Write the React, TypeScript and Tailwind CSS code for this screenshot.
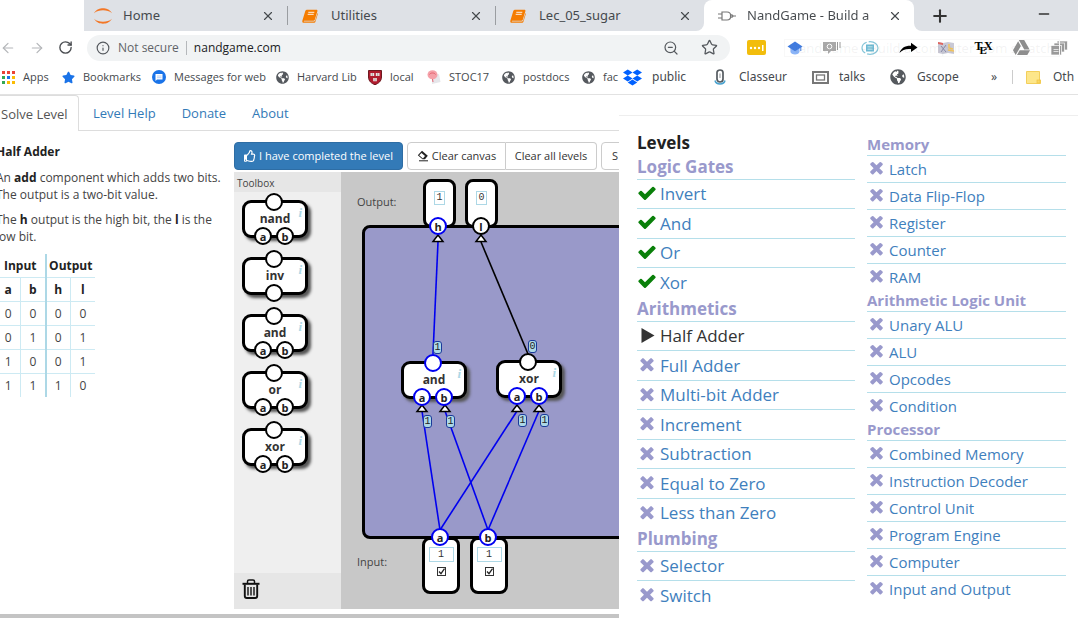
import React, { useState } from "react";
import { FaDropbox, FaGlobeAmericas, FaStar, FaRegThumbsUp, FaGoogleDrive } from "react-icons/fa";
import { ArrowLeft, ArrowRight, Info, Minus, Plus, RotateCw, Star, X, ZoomOut } from "lucide-react";

/* ---------- icons ---------- */

function JupyterIcon() {
  return (
    <svg viewBox="0 0 18 16" className="h-4 w-[18px] shrink-0" fill="#f37726">
      <path d="M0 5.2C2.500 1.200 6 .3 9 .3s6.500.9 9 4.900C15.500 3 12.500 2.200 9 2.200S2.500 3 0 5.200z" />
      <path d="M0 10.800C2.500 14.800 6 15.700 9 15.700s6.500-.9 9-4.900C15.500 13 12.500 13.800 9 13.800S2.500 13 0 10.800z" />
    </svg>
  );
}

function BookIcon() {
  return (
    <svg viewBox="0 0 16 14" className="h-[14px] w-4 shrink-0">
      <path d="M5 .8h9.300c.9 0 1.400.7 1.100 1.500l-2.600 8.500c-.2.600-.7 1-1.300 1H2.200c-.5 0-.6.8 0 .8h9.600c.7 0 1.200-.4 1.400-1l2.300-7.500.4.600-2.500 8c-.2.700-.8 1.100-1.500 1.100H1.800C.5 13.800 0 12.600.4 11.400L3.300 2C3.600 1.200 4.200.8 5 .8z" fill="#f57c00" />
      <path d="M6.300 3.300h6M5.700 5.300h6" stroke="#fff" strokeWidth=".9" />
    </svg>
  );
}

function GateIcon() {
  return (
    <svg viewBox="0 0 18 10" className="h-[10px] w-[18px] shrink-0" fill="none" stroke="#777" strokeWidth="1.200">
      <path d="M4 1h5c5 0 5 8 0 8H4zM0 3h4M0 7h4M14.600 5H18" />
      <circle cx="13.600" cy="5" r="1.200" />
    </svg>
  );
}

function AppsIcon() {
  const colors = ["#ea4335", "#ea4335", "#ea4335", "#34a853", "#1a73e8", "#fbbc04", "#34a853", "#fbbc04", "#fbbc04"];
  return (
    <svg viewBox="0 0 13 13" className="size-[13px] shrink-0">
      {colors.map((c, i) => (
        <rect key={i} x={(i % 3) * 5} y={Math.floor(i / 3) * 5} width="3" height="3" fill={c} />
      ))}
    </svg>
  );
}

function MessageIcon() {
  return (
    <svg viewBox="0 0 14 14" className="size-[14px] shrink-0">
      <circle cx="7" cy="7" r="7" fill="#1a73e8" />
      <path d="M3.500 4h7v5.500h-5.500L3.500 11z" fill="#fff" />
      <path d="M5 6h4.500M5 7.700h4.500" stroke="#a8c7f5" strokeWidth=".8" />
    </svg>
  );
}

function ShieldIcon() {
  return (
    <svg viewBox="0 0 14 15" className="h-[15px] w-[14px] shrink-0">
      <path d="M.5.500h13v6.500c0 4-3 6.500-6.500 7.700C3.500 13.500.5 11 .5 7z" fill="#b01c2e" stroke="#6d1a20" />
      <path d="M2.500 3h3.700v3H2.500zM7.800 3h3.700v3H7.800zM5.200 8h3.600v3.200H5.200z" fill="#f3e3e3" />
      <path d="M4.300 3v3M9.700 3v3M7 8v3" stroke="#888" strokeWidth=".7" />
    </svg>
  );
}

function BalloonIcon() {
  return (
    <svg viewBox="0 0 14 15" className="h-[15px] w-[14px] shrink-0">
      <path d="M5 6l7-2 1.500 8L5 14z" fill="#e6e6ea" />
      <ellipse cx="5.500" cy="4.800" rx="5" ry="4.500" fill="#f5a0a8" />
      <path d="M2.500 4.500c1-2 5-2 6 0M5.500 9l.5 3" stroke="#e4626f" fill="none" />
    </svg>
  );
}

function ClipIcon() {
  return (
    <svg viewBox="0 0 12 16" className="h-4 w-3 shrink-0" fill="none">
      <path d="M3 8V3.500a3 2.500 0 0 1 6 0V10a3 3 0 0 1-6 0z" stroke="#555b60" strokeWidth="1.700" />
      <path d="M6 4.500V9" stroke="#8b9196" />
      <path d="M1 11.500c1 4.500 9 4.500 10 0" stroke="#4aa3cf" strokeWidth="1.500" />
    </svg>
  );
}

function FrameIcon() {
  return (
    <svg viewBox="0 0 17 13" className="h-[13px] w-[17px] shrink-0" fill="none" stroke="#777">
      <rect x="1" y="1" width="15" height="11" strokeWidth="2" />
      <rect x="4.500" y="4" width="8" height="5" strokeWidth="1.300" />
    </svg>
  );
}

function FolderIcon() {
  return (
    <svg viewBox="0 0 15 13" className="h-[13px] w-[15px] shrink-0">
      <path d="M.5.500h13V9h1v3.500H.5z" fill="#fde68a" stroke="#f3cf5b" />
      <rect x="11" y="9" width="3" height="3" fill="#f9d865" stroke="#efc23f" strokeWidth=".7" />
    </svg>
  );
}

const CHECK =
  "M1671 566q0 40-28 68l-724 724-136 136q-28 28-68 28t-68-28l-136-136-362-362q-28-28-28-68t28-68l136-136q28-28 68-28t68 28l294 295 656-657q28-28 68-28t68 28l136 136q28 28 28 68z";
const CROSS =
  "M1490 1322q0 40-28 68l-136 136q-28 28-68 28t-68-28l-294-294-294 294q-28 28-68 28t-68-28l-136-136q-28-28-28-68t28-68l294-294-294-294q-28-28-28-68t28-68l136-136q28-28 68-28t68 28l294 294 294-294q28-28 68-28t68 28l136 136q28 28 28 68t-28 68l-294 294 294 294q28 28 28 68z";

type Status = "done" | "current" | "locked";

function StatusIcon({ status, small }: { status: Status; small?: boolean }) {
  if (status === "current") {
    return (
      <svg viewBox="0 0 20 20" className="mb-[2px] size-5 shrink-0" fill="#333">
        <path d="M4.500 3l13 7.500-13 7.500z" />
      </svg>
    );
  }
  return (
    <svg
      viewBox="0 0 1792 1792"
      className={small ? "mb-[3px] size-[19px] shrink-0" : "mb-[3px] size-5 shrink-0"}
      fill={status === "done" ? "#0a800a" : "#9999cc"}
    >
      <path d={status === "done" ? CHECK : CROSS} />
    </svg>
  );
}

/* ---------- browser chrome ---------- */

function Tab({ icon, title, active }: { icon: React.ReactNode; title: string; active?: boolean }) {
  return (
    <div
      className={
        active
          ? "flex h-full w-full items-center rounded-t-lg bg-white pr-3 pl-[14px]"
          : "flex h-[19px] w-[208px] items-center border-r border-[#9a9da1] pr-3 pl-[14px] last:border-r-0"
      }
    >
      <span className="flex w-5 shrink-0 items-center">{icon}</span>
      <span
        className={
          active
            ? "ml-[9px] flex-1 overflow-hidden bg-gradient-to-r from-[#45494d] from-85% to-white to-95% bg-clip-text text-[13px] whitespace-nowrap text-transparent"
            : "ml-[9px] flex-1 overflow-hidden text-[13px] whitespace-nowrap text-[#45494d]"
        }
      >
        {title}
      </span>
      <button aria-label={`Close ${title}`} className="shrink-0">
        <X className="size-[14px] text-[#45494d]" strokeWidth={2} />
      </button>
    </div>
  );
}

function TabStrip() {
  return (
    <div className="flex h-[31px] pl-[84px] font-['Noto_Sans',sans-serif]">
      <div className="flex items-center rounded-br-lg bg-[#dee1e6]">
        <div className="-ml-1 flex items-center">
          <Tab icon={<JupyterIcon />} title="Home" />
          <Tab icon={<BookIcon />} title="Utilities" />
          <Tab icon={<BookIcon />} title="Lec_05_sugar" />
        </div>
      </div>
      <div className="w-[210px] bg-[#dee1e6]">
        <Tab icon={<GateIcon />} title="NandGame - Build a" active />
      </div>
      <div className="flex flex-1 items-center justify-between rounded-bl-lg bg-[#dee1e6] pr-[26px] pl-4">
        <button aria-label="New tab">
          <Plus className="size-5 text-[#333]" strokeWidth={2.500} />
        </button>
        <button aria-label="Minimize" className="pb-1">
          <Minus className="size-4 text-[#333]" strokeWidth={2} />
        </button>
      </div>
    </div>
  );
}

function Extensions() {
  const icons = [
    <span key="y" className="flex h-[15px] w-[19px] items-center justify-center rounded-xs bg-[#f2bd0c]">
      <svg viewBox="0 0 16 8" className="h-2 w-4" fill="#fff">
        <circle cx="2" cy="4" r="1.200" />
        <circle cx="6" cy="4" r="1.200" />
        <circle cx="10" cy="4" r="1.200" />
        <rect x="13" y="1" width="1.500" height="6" />
      </svg>
    </span>,
    <svg key="c" viewBox="0 0 16 14" className="h-[14px] w-4">
      <path d="M3.500 6h9v4.500c0 4-9 4-9 0z" fill="#8ab4f8" />
      <path d="M8 .5L15.500 5.500 8 10.200.5 5.500z" fill="#3f7be0" />
      <path d="M13.800 6v4" stroke="#3f7be0" />
    </svg>,
    <svg key="m" viewBox="0 0 20 14" className="h-[14px] w-5">
      <path d="M1 1h13v9H9l-3 3v-3H1z" fill="#a9a9a9" />
      <path d="M15 1h1v8h-1zM17.500 1h1v6h-1z" fill="#999" />
      <circle cx="7.500" cy="5.500" r="2.300" fill="none" stroke="#fff" />
    </svg>,
    <svg key="o" viewBox="0 0 18 14" className="h-[14px] w-[18px]">
      <ellipse cx="9" cy="7" rx="8" ry="6.300" fill="none" stroke="#86c5d8" strokeWidth="1.200" strokeDasharray="14 2" />
      <rect x="5" y="3.500" width="8" height="7" fill="#6db9d3" />
      <path d="M6.500 5.500h5M6.500 7h5M6.500 8.500h5" stroke="#d5edf4" strokeWidth=".6" />
    </svg>,
    <svg key="a" viewBox="0 0 19 12" className="h-3 w-[19px]">
      <path d="M.5 11C2 6 6 3.500 12 3.700V.8L18.500 5.500 12 10V7C7 6.500 3.500 7.500.5 11z" />
    </svg>,
    <svg key="p" viewBox="0 0 16 14" className="h-[14px] w-4">
      <path d="M0 1l5 1 5-1 6 1v11l-6-1-5 1-5-1z" fill="#c9c9d6" />
      <path d="M0 1l5 1v2L0 3z" fill="#e0655f" />
      <path d="M10 9l6 1M11 3v4l4 1" stroke="#f2c25c" strokeWidth="1.500" fill="none" />
      <path d="M3 5l5 6M8 4L3 11" stroke="#8789a8" />
    </svg>,
    <span key="t" className="flex font-['Liberation_Serif',serif] text-[12px] leading-4 font-bold text-black">
      T<span className="-mx-[3px] mt-1 text-[11px]">E</span>X
    </span>,
    <FaGoogleDrive key="d" className="size-[17px] text-[#8e8e8e]" />,
    <svg key="w" viewBox="0 0 17 14" className="h-[14px] w-[17px]" fill="#9a9a9a" stroke="#fff" strokeWidth=".7">
      <rect x="6" y="0" width="10.500" height="9" />
      <rect x="3" y="2" width="10.500" height="9" />
      <rect x="0" y="4.500" width="10.500" height="9.500" />
      <path d="M2.500 8.500h5M2.500 10.500h5" />
    </svg>,
  ];
  return (
    <div className="relative flex w-[340px] shrink-0 items-center">
      {icons.map((icon, i) => (
        <button key={i} aria-label={`Extension ${i + 1}`} className="flex flex-1 justify-center">
          {icon}
        </button>
      ))}
      <div className="pointer-events-none absolute top-1/2 left-[46px] -translate-y-1/2 border border-[#f8f8f8] px-1 font-['Noto_Sans',sans-serif] text-[13px] leading-4 whitespace-nowrap text-[#888]/10">
        NandGame - Build a computer from scratch
      </div>
    </div>
  );
}

function Toolbar() {
  return (
    <div className="flex h-[33px] items-center">
      <div className="flex items-center gap-[13px]">
        <button aria-label="Back">
          <ArrowLeft className="size-4 text-[#b4b6b9]" strokeWidth={1.800} />
        </button>
        <button aria-label="Forward">
          <ArrowRight className="size-4 text-[#b4b6b9]" strokeWidth={1.800} />
        </button>
        <button aria-label="Reload">
          <RotateCw className="size-[15px] text-[#4a4d51]" strokeWidth={2.200} />
        </button>
      </div>
      <div className="ml-[14px] flex h-[26px] min-w-0 flex-1 items-center rounded-full bg-[#f1f3f4] pr-3 pl-[9px] text-[12px]">
        <Info className="size-[14px] shrink-0 text-[#55595e]" strokeWidth={2} />
        <span className="ml-2 shrink-0 text-[#5f6368]">Not secure</span>
        <span className="mx-[7px] h-[14px] w-px shrink-0 bg-[#b5b8bb]" />
        <input aria-label="Address" defaultValue="nandgame.com" className="min-w-0 flex-1 bg-transparent text-[#202124] outline-none" />
        <button aria-label="Zoom" className="mr-[22px]">
          <ZoomOut className="size-4 text-[#55595e]" strokeWidth={1.800} />
        </button>
        <button aria-label="Bookmark this page">
          <Star className="size-[17px] text-[#55595e]" strokeWidth={1.800} />
        </button>
      </div>
      <div className="ml-2 flex">
        <Extensions />
      </div>
    </div>
  );
}

function Bookmark({ icon, label, className }: { icon: React.ReactNode; label: string; className: string }) {
  return (
    <a href="#" className={`flex shrink-0 items-center whitespace-nowrap text-[#45494d] ${className}`}>
      {icon}
      {label}
    </a>
  );
}

function Bookmarks() {
  const globe = <FaGlobeAmericas className="size-[13px] shrink-0 text-[#55595e]" />;
  return (
    <div className="flex h-[31px] items-center border-b border-[#e2e2e2] pb-1">
      <div className="flex min-w-0 flex-1 items-center overflow-hidden pl-[2px] text-[11px]">
        <Bookmark className="w-[60px] gap-2" icon={<AppsIcon />} label="Apps" />
        <Bookmark className="w-[90px] gap-2" icon={<FaStar className="size-[13px] text-[#1a73e8]" />} label="Bookmarks" />
        <Bookmark className="w-[124px] gap-2" icon={<MessageIcon />} label="Messages for web" />
        <Bookmark className="w-[92px] gap-2" icon={globe} label="Harvard Lib" />
        <Bookmark className="w-[59px] gap-2" icon={<ShieldIcon />} label="local" />
        <Bookmark className="w-[75px] gap-2" icon={<BalloonIcon />} label="STOC17" />
        <Bookmark className="w-20 gap-2" icon={globe} label="postdocs" />
        <Bookmark className="gap-2" icon={globe} label="fac" />
      </div>
      <div className="flex w-[459px] shrink-0 items-center overflow-hidden pl-1 font-['Noto_Sans',sans-serif] text-[12px]">
        <Bookmark className="w-[91px] gap-[10px]" icon={<FaDropbox className="size-[19px] shrink-0 text-[#0061ff]" />} label="public" />
        <Bookmark className="w-[98px] gap-[13px]" icon={<ClipIcon />} label="Classeur" />
        <Bookmark className="w-[78px] gap-[10px]" icon={<FrameIcon />} label="talks" />
        <Bookmark className="w-[99px] gap-[11px]" icon={<FaGlobeAmericas className="size-4 shrink-0 text-[#55595e]" />} label="Gscope" />
        <button className="w-[23px] shrink-0 pl-[2px] text-left text-[#45494d]" aria-label="More bookmarks">
          »
        </button>
        <span className="mr-[13px] h-[14px] w-px shrink-0 bg-[#ccc]" />
        <Bookmark className="gap-3" icon={<FolderIcon />} label="Oth" />
      </div>
    </div>
  );
}

/* ---------- game ---------- */

function Pin({ label, live, className }: { label?: string; live?: boolean; className: string }) {
  return (
    <span
      className={`absolute z-10 flex size-[18px] items-center justify-center rounded-full border-2 bg-white text-[11px] leading-none font-bold text-[#222] ${
        live ? "border-[#0000f0]" : "border-black"
      } ${className}`}
    >
      {label}
    </span>
  );
}

function Gate({ name, live, outLive }: { name: string; live?: boolean; outLive?: boolean }) {
  return (
    <div className="relative flex h-[38px] w-[66px] items-center justify-center rounded-[9px] border-[3px] border-black bg-white text-[12px] font-bold text-[#333] shadow-[3px_3px_3px_#555]">
      {name}
      <span className="absolute top-[3px] right-[3px] font-['Liberation_Serif',serif] text-[13px] leading-none font-bold text-[#add8e6] italic">i</span>
      <Pin className="-top-[10px] left-5" live={outLive} />
      {name === "inv" ? (
        <Pin className="top-6 left-5" />
      ) : (
        <>
          <Pin label="a" className="top-6 left-[9px]" live={live} />
          <Pin label="b" className="top-6 left-[31px]" live={live} />
        </>
      )}
    </div>
  );
}

function Toolbox() {
  return (
    <div className="flex w-[107px] shrink-0 flex-col bg-[#efefef]">
      <div className="h-5 bg-[#e6e6e6] pl-[3px] text-[10px] leading-[22px] text-[#444]">Toolbox</div>
      <div className="flex flex-1 flex-col gap-[19px] pt-2 pl-2">
        {["nand", "inv", "and", "or", "xor"].map((n) => (
          <Gate key={n} name={n} />
        ))}
      </div>
      <div className="flex h-9 items-center bg-[#e6e6e6] pb-1 pl-2">
        <button aria-label="Trash">
          <svg viewBox="0 0 18 20" className="h-5 w-[18px]" fill="none" stroke="#111">
            <path d="M.5 4.800h17" strokeWidth="2" />
            <path d="M5.500 4V2.500c0-1 .5-1.500 1.500-1.500h4c1 0 1.500.5 1.500 1.500V4" strokeWidth="1.500" />
            <path d="M2.800 5.500v11.500c0 1.300.7 2 2 2h8.400c1.300 0 2-.7 2-2V5.500" strokeWidth="1.900" />
            <path d="M6 8v8.500M9 8v8.500M12 8v8.500" strokeWidth="1.400" />
          </svg>
        </button>
      </div>
    </div>
  );
}

function Badge({ value, className }: { value: string; className: string }) {
  return (
    <span
      className={`absolute z-10 flex h-[13px] w-[9px] items-center justify-center rounded-[3px] border border-[#1a3a9a] bg-[#add8e6] font-['Liberation_Mono',monospace] text-[10px] leading-none text-[#222] ${className}`}
    >
      {value}
    </span>
  );
}

function OutputNode({ value, className }: { value: string; className: string }) {
  return (
    <div className={`absolute flex h-[49px] w-[33px] justify-center rounded-lg border-[3px] border-black bg-white pt-[9px] ${className}`}>
      <span className="flex h-[14px] w-[11px] items-center justify-center border border-[#add8e6] font-['Liberation_Mono',monospace] text-[10px] leading-none text-[#333]">
        {value}
      </span>
    </div>
  );
}

function InputNode({ name, className }: { name: string; className: string }) {
  const [on, setOn] = useState(true);
  return (
    <div className={`absolute flex h-[57px] w-[38px] flex-col items-center rounded-lg border-[3px] border-black bg-white pt-[7px] ${className}`}>
      <span className="flex h-[15px] w-[25px] items-center justify-center border border-[#add8e6] font-['Liberation_Mono',monospace] text-[10px] leading-none text-[#333]">
        {on ? 1 : 0}
      </span>
      <label className="relative mt-[5px] block size-[9px]">
        <input
          type="checkbox"
          aria-label={`Input ${name}`}
          checked={on}
          onChange={() => setOn(!on)}
          className="block size-[9px] appearance-none border border-[#333] bg-white"
        />
        {on && (
          <svg viewBox="0 0 9 9" className="pointer-events-none absolute inset-0" fill="none" stroke="#222" strokeWidth="1.300">
            <path d="M2 4.500l2 2.200 3.500-5" />
          </svg>
        )}
      </label>
    </div>
  );
}

const WIRES = [
  { d: "M92 182L97 70", live: true },
  { d: "M187 182L140 70", live: false },
  { d: "M99 358L81 239", live: true },
  { d: "M99 358L176 239", live: true },
  { d: "M147 358L104 239", live: true },
  { d: "M147 358L198 239", live: true },
];
const ARROWS = [
  [97, 63],
  [140, 63],
  [81, 233],
  [104, 233],
  [176, 233],
  [198, 233],
];

function Canvas() {
  return (
    <div className="relative min-w-0 flex-1 overflow-hidden bg-[#c8c8c8] text-[11px] text-[#444]">
      <span className="absolute top-[22px] left-4">Output:</span>
      <span className="absolute top-[382px] left-4">Input:</span>
      <div className="absolute top-[53px] -right-5 left-[21px] h-[314px] rounded-lg border-[3px] border-black bg-[#9999c9]" />
      <OutputNode value="1" className="top-[7px] left-[82px]" />
      <OutputNode value="0" className="top-[7px] left-[124px]" />
      <InputNode name="a" className="top-[365px] left-[81px]" />
      <InputNode name="b" className="top-[365px] left-[129px]" />
      <div className="absolute top-[189px] left-[60px]">
        <Gate name="and" live outLive />
      </div>
      <div className="absolute top-[188px] left-[155px]">
        <Gate name="xor" live />
      </div>
      <svg className="absolute inset-0 size-full" fill="none" strokeWidth="1.600">
        {WIRES.map((w) => (
          <path key={w.d} d={w.d} stroke={w.live ? "#0000f0" : "#000"} />
        ))}
        {ARROWS.map(([x, y]) => (
          <path key={`${x}-${y}`} d={`M${x} ${y}l5 6.500h-10z`} stroke="#000" fill="#fff" strokeWidth="1.500" />
        ))}
      </svg>
      <Pin label="h" live className="top-[45px] left-[88px]" />
      <Pin label="l" className="top-[45px] left-[131px]" />
      <Pin label="a" live className="top-[356px] left-[90px]" />
      <Pin label="b" live className="top-[356px] left-[138px]" />
      <Badge value="1" className="top-[169px] left-[92px]" />
      <Badge value="0" className="top-[168px] left-[187px]" />
      <Badge value="1" className="top-[243px] left-[82px]" />
      <Badge value="1" className="top-[243px] left-[105px]" />
      <Badge value="1" className="top-[242px] left-[177px]" />
      <Badge value="1" className="top-[242px] left-[199px]" />
    </div>
  );
}

const TRUTH = [
  [0, 0, 0, 0],
  [0, 1, 0, 1],
  [1, 0, 0, 1],
  [1, 1, 1, 0],
];

function Description() {
  return (
    <aside className="-ml-1 w-[238px] shrink-0 pt-3 text-[12px] leading-[17px] text-[#444]">
      <h1 className="font-bold text-[#222]">Half Adder</h1>
      <p className="mt-[9px] whitespace-nowrap">
        An <b className="text-[#222]">add</b> component which adds two bits.
        <br />
        The output is a two-bit value.
      </p>
      <p className="mt-2 whitespace-nowrap">
        The <b className="text-[#222]">h</b> output is the high bit, the <b className="text-[#222]">l</b> is the
        <br />
        low bit.
      </p>
      <table className="mt-[9px] w-[99px] table-fixed border-collapse text-center leading-[23px]">
        <thead className="text-[#222]">
          <tr>
            <th colSpan={2} className="border-r-2 border-[#add8e6]">Input</th>
            <th colSpan={2}>Output</th>
          </tr>
          <tr className="border-t border-[#cdeaf3]">
            <th className="border-r border-[#cdeaf3]">a</th>
            <th className="border-r-2 border-r-[#add8e6]">b</th>
            <th className="border-r border-[#cdeaf3]">h</th>
            <th>l</th>
          </tr>
        </thead>
        <tbody>
          {TRUTH.map((row, i) => (
            <tr key={i} className="border-t border-[#cdeaf3]">
              {row.map((v, j) => (
                <td key={j} className={j === 1 ? "border-r-2 border-r-[#add8e6]" : j < 3 ? "border-r border-[#cdeaf3]" : ""}>
                  {v}
                </td>
              ))}
            </tr>
          ))}
        </tbody>
      </table>
    </aside>
  );
}

function Game() {
  return (
    <main className="flex min-w-0 flex-1 flex-col overflow-hidden">
      <nav className="flex h-9 text-[13px] leading-[37px] text-[#337ab7]">
        <a href="#" className="w-[79px] shrink-0 rounded-tr-sm border-t border-r border-[#ddd] pl-px whitespace-nowrap text-[#555]">
          Solve Level
        </a>
        <div className="flex flex-1 gap-[26px] border-b border-[#ddd] pl-[14px]">
          <a href="#">Level Help</a>
          <a href="#">Donate</a>
          <a href="#">About</a>
        </div>
      </nav>
      <div className="flex flex-1">
        <Description />
        <div className="flex min-w-0 flex-1 flex-col pt-[11px]">
          <div className="flex h-7 items-stretch gap-1 text-[11px] whitespace-nowrap text-[#333]">
            <button className="flex w-[169px] shrink-0 items-center justify-center gap-[3px] rounded-sm border border-[#2e6da4] bg-[#337ab7] text-white">
              <FaRegThumbsUp className="mb-px size-3" />
              I have completed the level
            </button>
            <div className="flex shrink-0">
              <button className="flex w-[99px] items-center justify-center gap-[3px] rounded-l-sm border border-[#ccc]">
                <svg viewBox="0 0 12 12" className="size-3" fill="#222">
                  <path d="M5 .8L10.800 5.700 8 9.300H5.500L.8 5.300zM4.500 3L2.200 5.300 5.900 8.400 8 6z" fillRule="evenodd" />
                  <path d="M2 10.300h9v1H2z" />
                </svg>
                Clear canvas
              </button>
              <button className="w-[91px] rounded-r-sm border border-l-0 border-[#ccc]">Clear all levels</button>
            </div>
            <button className="w-20 shrink-0 rounded-l-sm border border-[#ccc] pl-[10px] text-left">S</button>
          </div>
          <div className="mt-[2px] flex min-h-[437px] flex-1">
            <Toolbox />
            <Canvas />
          </div>
        </div>
      </div>
      <div className="mt-[5px] h-1 bg-[#c4c4c4]" />
    </main>
  );
}

/* ---------- level list ---------- */

type Section = { title: string; levels: string[] };

const LEFT: Section[] = [
  { title: "Logic Gates", levels: ["Invert", "And", "Or", "Xor"] },
  {
    title: "Arithmetics",
    levels: ["Half Adder", "Full Adder", "Multi-bit Adder", "Increment", "Subtraction", "Equal to Zero", "Less than Zero"],
  },
  { title: "Plumbing", levels: ["Selector", "Switch"] },
];
const RIGHT: Section[] = [
  { title: "Memory", levels: ["Latch", "Data Flip-Flop", "Register", "Counter", "RAM"] },
  { title: "Arithmetic Logic Unit", levels: ["Unary ALU", "ALU", "Opcodes", "Condition"] },
  {
    title: "Processor",
    levels: ["Combined Memory", "Instruction Decoder", "Control Unit", "Program Engine", "Computer", "Input and Output"],
  },
];

function statusOf(section: string, level: string): Status {
  if (section === "Logic Gates") return "done";
  return level === "Half Adder" ? "current" : "locked";
}

function LevelSection({ section, small }: { section: Section; small?: boolean }) {
  return (
    <section>
      <h3 className={small ? "h-[21px] text-[15px] leading-[21px] font-bold text-[#9999cc]" : "h-6 text-[17px] leading-6 font-bold text-[#9999cc]"}>
        {section.title}
      </h3>
      <ul>
        {section.levels.map((level) => {
          const status = statusOf(section.title, level);
          return (
            <li
              key={level}
              className={
                small
                  ? "flex h-[27px] items-center border-t border-[#b5dfea] text-[15px]"
                  : "flex items-center border-t border-[#b5dfea] text-[17px] odd:h-[29px] even:h-[30px]"
              }
            >
              <a href="#" className={status === "current" ? "flex items-center gap-[3px] text-[#333]" : "flex items-center gap-[3px] text-[#3f80bd]"}>
                <StatusIcon status={status} small={small} />
                {level}
              </a>
            </li>
          );
        })}
      </ul>
    </section>
  );
}

function Levels() {
  return (
    <aside className="w-[459px] shrink-0 pt-5">
      <div className="border-t border-[#eee]" />
      <div className="grid grid-cols-[218px_199px] gap-x-3 pt-[15px] pl-[18px]">
        <div>
          <h2 className="h-6 text-[17px] leading-6 font-bold text-[#222]">Levels</h2>
          {LEFT.map((s) => (
            <LevelSection key={s.title} section={s} />
          ))}
        </div>
        <div className="pt-[3px]">
          {RIGHT.map((s) => (
            <LevelSection key={s.title} section={s} small />
          ))}
        </div>
      </div>
    </aside>
  );
}

export default function App() {
  return (
    <div className="flex min-h-screen flex-col overflow-hidden bg-white font-['Open_Sans','Noto_Sans',sans-serif]">
      <header>
        <TabStrip />
        <Toolbar />
        <Bookmarks />
      </header>
      <div className="flex flex-1">
        <Game />
        <Levels />
      </div>
    </div>
  );
}
